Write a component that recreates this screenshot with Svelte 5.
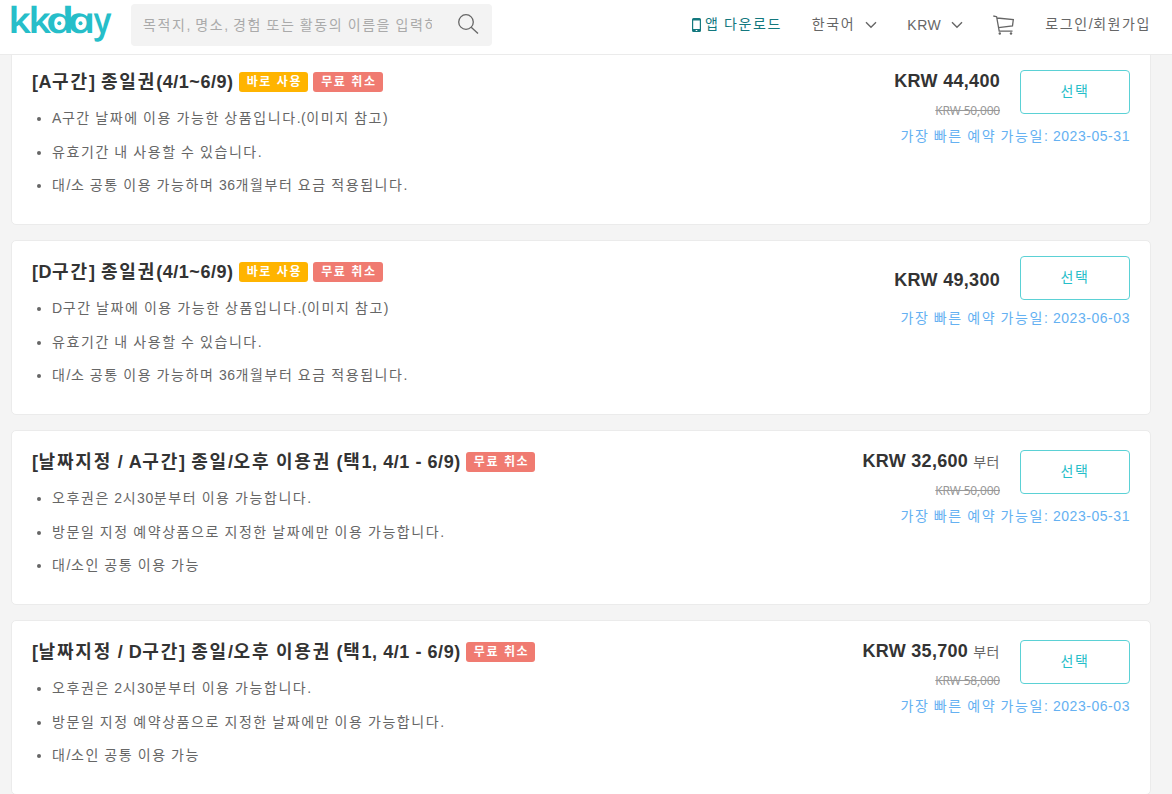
<script lang="ts">
	type Tag = { label: string; kind: 'instant' | 'free' };

	const instant: Tag = { label: '바로 사용', kind: 'instant' };
	const free: Tag = { label: '무료 취소', kind: 'free' };

	// wordmark letters: left offset and horizontal stretch
	const letters = [
		{ char: 'k', x: 0.4, stretch: 1.2 },
		{ char: 'k', x: 20.4, stretch: 1.2 },
		{ char: 'd', x: 38.3, stretch: 1.4 },
		{ char: 'a', x: 59.6, stretch: 1.4 },
		{ char: 'y', x: 86, stretch: 1 }
	];

	const packages = [
		{
			title: '[A구간] 종일권(4/1~6/9)',
			tags: [instant, free],
			notes: [
				'A구간 날짜에 이용 가능한 상품입니다.(이미지 참고)',
				'유효기간 내 사용할 수 있습니다.',
				'대/소 공통 이용 가능하며 36개월부터 요금 적용됩니다.'
			],
			price: '44,400',
			from: false,
			original: '50,000',
			date: '2023-05-31'
		},
		{
			title: '[D구간] 종일권(4/1~6/9)',
			tags: [instant, free],
			notes: [
				'D구간 날짜에 이용 가능한 상품입니다.(이미지 참고)',
				'유효기간 내 사용할 수 있습니다.',
				'대/소 공통 이용 가능하며 36개월부터 요금 적용됩니다.'
			],
			price: '49,300',
			from: false,
			original: '',
			date: '2023-06-03'
		},
		{
			title: '[날짜지정 / A구간] 종일/오후 이용권 (택1, 4/1 - 6/9)',
			tags: [free],
			notes: [
				'오후권은 2시30분부터 이용 가능합니다.',
				'방문일 지정 예약상품으로 지정한 날짜에만 이용 가능합니다.',
				'대/소인 공통 이용 가능'
			],
			price: '32,600',
			from: true,
			original: '50,000',
			date: '2023-05-31'
		},
		{
			title: '[날짜지정 / D구간] 종일/오후 이용권 (택1, 4/1 - 6/9)',
			tags: [free],
			notes: [
				'오후권은 2시30분부터 이용 가능합니다.',
				'방문일 지정 예약상품으로 지정한 날짜에만 이용 가능합니다.',
				'대/소인 공통 이용 가능'
			],
			price: '35,700',
			from: true,
			original: '58,000',
			date: '2023-06-03'
		}
	];

	// odd entries are the Hangul runs
	function runs(value: string) {
		return value.split(/([가-힣]+)/);
	}
</script>

<!-- Hangul is tracked wider than digits and Latin -->
{#snippet text(value: string)}
	{#each runs(value) as run, i}{#if i % 2}<span class="ko">{run}</span>{:else}{run}{/if}{/each}
{/snippet}

{#snippet chevron()}
	<svg class="chevron" width="12" height="8" viewBox="0 0 12 8">
		<path d="M1 1.2 6 6.2 11 1.2" fill="none" stroke="#666" stroke-width="1.4" />
	</svg>
{/snippet}

<div class="page">
	<header>
		<a class="logo" href="/" aria-label="kkday">
			<svg width="102" height="46" viewBox="0 0 102 46">
				{#each letters as { char, x, stretch }}
					<text class="wordmark" transform="translate({x} 33) scale({stretch} 1) skewX(12)">{char}</text>
				{/each}
				<circle cx="49.3" cy="23.3" r="2" fill="#26bec9" />
				<circle cx="70.5" cy="23.3" r="2" fill="#26bec9" />
			</svg>
		</a>
		<div class="search">
			<span class="placeholder">{@render text('목적지, 명소, 경험 또는 활동의 이름을 입력하세요')}</span>
			<svg width="22" height="22" viewBox="0 0 22 22" fill="none" stroke="#666" stroke-width="1.3">
				<circle cx="9" cy="8" r="7.3" />
				<path d="M14.2 13.2 21 19.5" />
			</svg>
		</div>
		<nav>
			<a class="app" href="/app">
				<svg width="9" height="14" viewBox="0 0 9 14">
					<path
						fill="#13787e"
						fill-rule="evenodd"
						d="M1.5 0h6A1.5 1.5 0 0 1 9 1.5v11A1.5 1.5 0 0 1 7.5 14h-6A1.5 1.5 0 0 1 0 12.5v-11A1.5 1.5 0 0 1 1.5 0zM1.2 2.5v8.5h6.6V2.5zM3.7 12h1.6v1H3.7z"
					/>
				</svg>
				<span>{@render text('앱 다운로드')}</span>
			</a>
			<span class="menu"><span class="ko">한국어</span>{@render chevron()}</span>
			<span class="menu">KRW{@render chevron()}</span>
			<svg class="cart" width="22" height="20" viewBox="0 0 22 20" fill="none" stroke="#666" stroke-width="1.3">
				<path d="M.3 1 3.6 1.7 6.2 16.2H19.5M4 3 20.3 4.5 19.5 10.8 5.4 12.6" />
				<circle cx="6.8" cy="18.5" r="1.2" fill="#666" stroke="none" />
				<circle cx="18" cy="18.5" r="1.2" fill="#666" stroke="none" />
			</svg>
			<a href="/login"><span>{@render text('로그인/회원가입')}</span></a>
		</nav>
	</header>

	<main>
		{#each packages as item}
			<section class="card">
				<div class="info">
					<div class="heading">
						<h3>{@render text(item.title)}</h3>
						{#each item.tags as tag}
							<span class="tag {tag.kind}">{tag.label}</span>
						{/each}
					</div>
					<ul>
						{#each item.notes as note}
							<li>{@render text(note)}</li>
						{/each}
					</ul>
				</div>
				<div class="side">
					<div class="buy">
						<div class="prices" class:single={!item.original}>
							<div class="price">
								<b>KRW {item.price}</b>{#if item.from}<small>부터</small>{/if}
							</div>
							{#if item.original}
								<del>KRW {item.original}</del>
							{/if}
						</div>
						<button>선택</button>
					</div>
					<div class="date">{@render text('가장 빠른 예약 가능일: ' + item.date)}</div>
				</div>
			</section>
		{/each}
	</main>
</div>

<style>
	:global(body) {
		background: #f4f4f4;
	}
	.page {
		height: 794px;
		overflow: hidden;
		font-family: 'Liberation Sans', 'Noto Sans CJK KR', sans-serif;
		font-size: 14px;
		letter-spacing: 0.55px;
		color: #666;
	}
	a {
		color: inherit;
		text-decoration: none;
	}
	.ko {
		letter-spacing: 1.58px;
	}
	header {
		position: relative;
		z-index: 1;
		display: flex;
		box-sizing: border-box;
		height: 55px;
		padding: 0 21px 0 10px;
		border-bottom: 1px solid #ebebeb;
		background: #fff;
	}
	.logo {
		width: 102px;
		height: 46px;
	}
	.logo svg {
		overflow: visible;
	}
	.wordmark {
		font-family: 'Open Sans', sans-serif;
		font-size: 36px;
		font-style: italic;
		font-weight: 600;
		letter-spacing: 0;
		fill: #26bec9;
	}
	.search {
		display: flex;
		align-items: center;
		justify-content: space-between;
		box-sizing: border-box;
		width: 361px;
		height: 42px;
		margin: 4px 0 0 19px;
		padding: 0 13px 0 12px;
		border-radius: 4px;
		background: #f3f3f3;
	}
	.placeholder {
		width: 289px;
		padding-bottom: 3px;
		overflow: hidden;
		white-space: nowrap;
		color: #aaa;
	}
	nav {
		display: flex;
		align-items: center;
		gap: 30px;
		height: 50px;
		margin-left: auto;
		white-space: nowrap;
	}
	nav > * {
		display: flex;
		align-items: center;
	}
	nav span {
		line-height: 20px;
	}
	nav a > span {
		padding-bottom: 2px;
	}
	.app {
		gap: 4px;
		color: #13787e;
	}
	.menu > .ko {
		padding-bottom: 2px;
	}
	.chevron {
		margin-left: 10px;
	}
	main {
		display: flex;
		flex-direction: column;
		gap: 15px;
		margin: -5px 21px 0 11px;
	}
	.card {
		display: flex;
		justify-content: space-between;
		box-sizing: border-box;
		height: 175px;
		padding: 0 20px;
		border: 1px solid #ebebeb;
		border-radius: 5px;
		background: #fff;
	}
	.heading {
		display: flex;
		align-items: center;
		height: 22px;
		margin-top: 20px;
	}
	h3 {
		margin: 0;
		font-size: 18px;
		line-height: 22px;
		color: #333;
	}
	h3 .ko {
		letter-spacing: 1.83px;
	}
	.tag {
		height: 20px;
		margin-left: 5px;
		padding: 0 6px 0 8px;
		border-radius: 3px;
		font-size: 12px;
		font-weight: 700;
		line-height: 20px;
		letter-spacing: 1.6px;
		color: #fff;
	}
	.instant {
		background: #ffb400;
	}
	.free {
		background: #f07b71;
	}
	ul {
		margin: 9px 0 0;
		padding-left: 20px;
	}
	li {
		line-height: 33.5px;
	}
	.side {
		padding-top: 15px;
		text-align: right;
	}
	.buy {
		display: flex;
		align-items: center;
		justify-content: flex-end;
		gap: 20px;
	}
	.single {
		padding-top: 3px;
	}
	.price {
		height: 30px;
		line-height: 30px;
	}
	.price b {
		font-size: 18px;
		letter-spacing: 0.3px;
		color: #333;
	}
	small {
		margin-left: 5px;
		font-size: 14px;
	}
	del {
		display: block;
		margin-top: 8px;
		font-family: 'Noto Sans', sans-serif;
		font-size: 12px;
		line-height: 14px;
		letter-spacing: -0.2px;
		color: #999;
	}
	button {
		width: 110px;
		height: 44px;
		padding: 0 0 4px;
		border: 1px solid #5bd1d5;
		border-radius: 4px;
		background: #fff;
		font: inherit;
		letter-spacing: 1.5px;
		color: #26bec9;
	}
	.date {
		margin-top: 8px;
		line-height: 20px;
		color: #65b1f2;
	}
</style>
